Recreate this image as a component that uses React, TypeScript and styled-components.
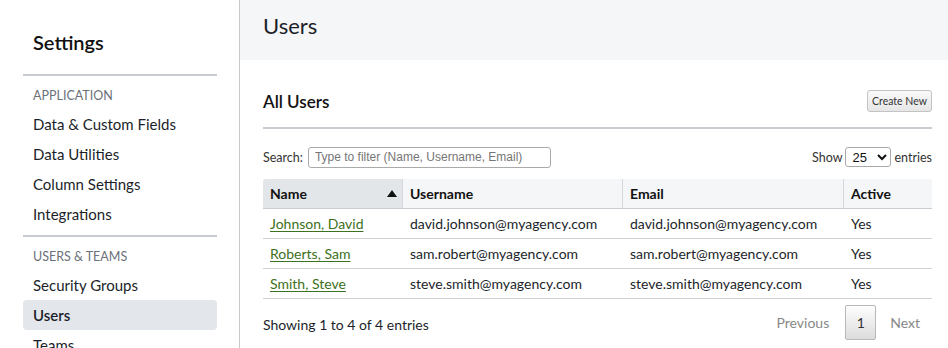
import React from "react";
import styled, { createGlobalStyle } from "styled-components";

const Global = createGlobalStyle`
  html, body { margin: 0; padding: 0; background: #fff; }
  body { font-family: Lato, "Noto Sans", sans-serif; color: #1f2328; }
  * { box-sizing: border-box; }
`;

const Page = styled.div`
  display: flex;
  height: 348px;
  overflow: hidden;
`;

const Sidebar = styled.aside`
  width: 240px;
  flex: none;
  border-right: 1px solid #c9c9c9;
  padding: 0 22px 0 23px;
`;

const SideTitle = styled.h2`
  margin: 0;
  padding: 30px 10px 0;
  font-size: 20px;
  line-height: 24px;
  font-weight: 600;
  color: #111;
`;

const SideRule = styled.hr<{ $top: number }>`
  margin: ${(p) => p.$top}px 0 0;
  border: 0;
  height: 2px;
  background: #c8cbd0;
`;

const SectionLabel = styled.div`
  margin-top: 12px;
  margin-bottom: 5px;
  padding: 0 10px;
  font-size: 12.5px;
  line-height: 16px;
  text-transform: uppercase;
  color: #6b7079;
`;

const NavItem = styled.div<{ $active?: boolean }>`
  padding: 0 10px;
  font-size: 15px;
  line-height: 30px;
  border-radius: 4px;
  color: #1c1f2a;
  background: ${(p) => (p.$active ? "#e3e6ea" : "transparent")};
  font-weight: ${(p) => (p.$active ? 600 : 400)};
`;

const Main = styled.main`
  flex: 1;
  min-width: 0;
`;

const PageHeader = styled.header`
  height: 60px;
  background: #f5f6f7;
  padding: 13px 23px 0;
  font-size: 22px;
  line-height: 26px;
  font-weight: 400;
  color: #1c1f2a;
`;

const Content = styled.section`
  padding: 30px 16px 0 23px;
`;

const TitleRow = styled.div`
  display: flex;
  align-items: center;
  justify-content: space-between;
  height: 24px;
`;

const SectionTitle = styled.h3`
  margin: 0;
  font-size: 17px;
  font-weight: 600;
  line-height: 24px;
  color: #111;
`;

const SmallButton = styled.button`
  width: 65px;
  height: 22px;
  padding: 0;
  font-family: inherit;
  font-size: 10.5px;
  color: #333;
  border: 1px solid #c3c3c3;
  border-radius: 3px;
  background: linear-gradient(#fafafa, #e6e6e6);
  margin-top: -2px;
`;

const ContentRule = styled.hr`
  margin: 13px 0 0;
  border: 0;
  height: 2px;
  background: #c8cbd0;
`;

const Controls = styled.div`
  display: flex;
  align-items: center;
  justify-content: space-between;
  margin-top: 17px;
  height: 22px;
  font-size: 12.5px;
  color: #333;
`;

const Label = styled.label<{ $gap: number }>`
  display: flex;
  align-items: center;
  gap: ${(p) => p.$gap}px;
`;

const SearchInput = styled.input`
  width: 243px;
  height: 21px;
  border: 1px solid #aaa;
  border-radius: 3px;
  padding: 0 6px;
  font-family: "Liberation Sans", Arial, sans-serif;
  font-size: 12px;
  color: #333;
  &::placeholder { color: #767676; }
`;

const Select = styled.select`
  width: 46px;
  height: 20px;
  border: 1px solid #aaa;
  border-radius: 3px;
  font-family: "Liberation Sans", Arial, sans-serif;
  font-size: 13px;
  background: #fff;
  color: #111;
  padding: 0 2px;
`;

const Table = styled.table`
  width: 100%;
  margin-top: 11px;
  border-collapse: separate;
  border-spacing: 0;
  font-size: 14px;
`;

const Th = styled.th<{ $w: number; $sorted?: boolean; $last?: boolean }>`
  width: ${(p) => p.$w}px;
  height: 30px;
  text-align: left;
  padding: 0 7px;
  font-weight: 700;
  color: #111;
  background: ${(p) => (p.$sorted ? "#e3e6e9" : "#f5f6f7")};
  border-bottom: 1px solid #c9ccd0;
  border-right: ${(p) => (p.$last ? "0" : "1px solid #d4d7db")};
  &:first-child { border-top-left-radius: 3px; }
  &:last-child { border-top-right-radius: 3px; }
`;

const ThInner = styled.div`
  display: flex;
  align-items: center;
  justify-content: space-between;
  margin-right: -2px;
`;

const Td = styled.td`
  height: 30px;
  padding: 0 7px;
  border-bottom: 1px solid #cfd2d6;
  color: #1c1f2a;
`;

const NameLink = styled.a`
  color: #3d7020;
  text-decoration: underline;
  text-underline-offset: 2px;
`;

const Footer = styled.div`
  display: flex;
  align-items: center;
  justify-content: space-between;
  margin-top: 6px;
  font-size: 14px;
  color: #1c1f2a;
`;

const FooterInfo = styled.span`
  padding-top: 3px;
`;

const Pager = styled.div`
  display: flex;
  align-items: center;
`;

const PageLink = styled.span`
  color: #888;
  padding: 0 12px;
  line-height: 35px;
`;

const PageCurrent = styled.span`
  display: inline-flex;
  align-items: center;
  justify-content: center;
  width: 31px;
  height: 35px;
  margin: 0 2px 0 4px;
  border: 1px solid #b8b8b8;
  border-radius: 2px;
  background: linear-gradient(#fefefe, #dcdcdc);
  color: #333;
`;

const users = [
  { name: "Johnson, David", user: "david.johnson@myagency.com", email: "david.johnson@myagency.com" },
  { name: "Roberts, Sam", user: "sam.robert@myagency.com", email: "sam.robert@myagency.com" },
  { name: "Smith, Steve", user: "steve.smith@myagency.com", email: "steve.smith@myagency.com" },
];

export default function App() {
  return (
    <Page>
      <Global />
      <Sidebar>
        <SideTitle>Settings</SideTitle>
        <SideRule $top={20} />
        <SectionLabel>Application</SectionLabel>
        <NavItem>Data &amp; Custom Fields</NavItem>
        <NavItem>Data Utilities</NavItem>
        <NavItem>Column Settings</NavItem>
        <NavItem>Integrations</NavItem>
        <SideRule $top={6} />
        <SectionLabel>Users &amp; Teams</SectionLabel>
        <NavItem>Security Groups</NavItem>
        <NavItem $active>Users</NavItem>
        <NavItem>Teams</NavItem>
      </Sidebar>
      <Main>
        <PageHeader>Users</PageHeader>
        <Content>
          <TitleRow>
            <SectionTitle>All Users</SectionTitle>
            <SmallButton>Create New</SmallButton>
          </TitleRow>
          <ContentRule />
          <Controls>
            <Label $gap={5}>
              Search:
              <SearchInput placeholder="Type to filter (Name, Username, Email)" />
            </Label>
            <Label $gap={3}>
              Show
              <Select defaultValue="25">
                <option>10</option>
                <option>25</option>
                <option>50</option>
              </Select>
              entries
            </Label>
          </Controls>
          <Table>
            <thead>
              <tr>
                <Th $w={140} $sorted>
                  <ThInner>
                    Name
                    <svg width="10" height="7" viewBox="0 0 10 7">
                      <path d="M0 7 L5 0 L10 7 Z" fill="#111" />
                    </svg>
                  </ThInner>
                </Th>
                <Th $w={220}>Username</Th>
                <Th $w={221}>Email</Th>
                <Th $w={88} $last>Active</Th>
              </tr>
            </thead>
            <tbody>
              {users.map((u) => (
                <tr key={u.name}>
                  <Td>
                    <NameLink href="#">{u.name}</NameLink>
                  </Td>
                  <Td>{u.user}</Td>
                  <Td>{u.email}</Td>
                  <Td>Yes</Td>
                </tr>
              ))}
            </tbody>
          </Table>
          <Footer>
            <FooterInfo>Showing 1 to 4 of 4 entries</FooterInfo>
            <Pager>
              <PageLink>Previous</PageLink>
              <PageCurrent>1</PageCurrent>
              <PageLink>Next</PageLink>
            </Pager>
          </Footer>
        </Content>
      </Main>
    </Page>
  );
}
